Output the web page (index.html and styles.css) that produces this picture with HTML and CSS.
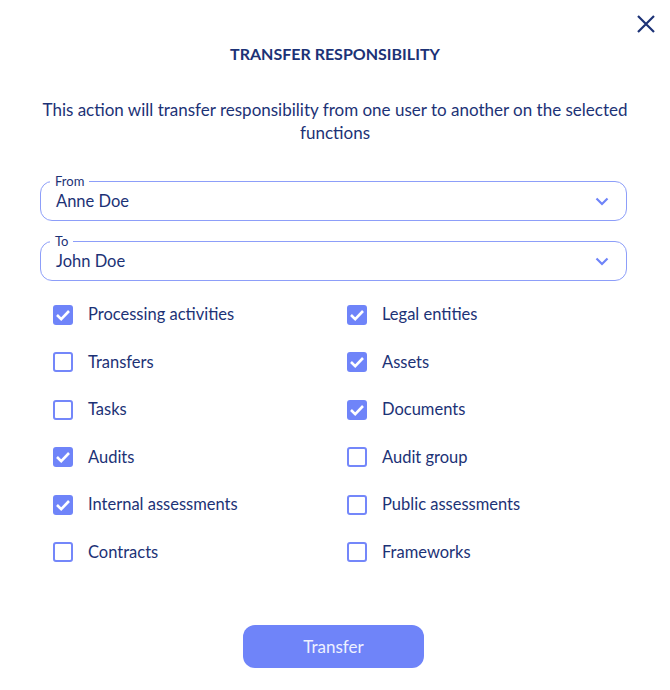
FILE: index.html
```html
<!DOCTYPE html>
<html lang="en">
<head>
    <meta charset="UTF-8">
    <title>Transfer responsibility</title>
    <link rel="stylesheet" href="styles.css">
</head>
<body>
    <div class="modal">
        <div class="modal-top">
            <a href="javascript:;" class="close">
                <svg width="18" height="18" viewBox="0 0 18 18"><path d="M1 1 L17 17 M17 1 L1 17" stroke="#1c3276" stroke-width="2.2" fill="none"/></svg>
            </a>
        </div>
        <h1 class="title">TRANSFER RESPONSIBILITY</h1>
        <p class="desc">This action will transfer responsibility from one user to another on the selected functions</p>

        <div class="select">
            <span class="label">From</span>
            <span class="value">Anne Doe</span>
            <svg class="chev" width="14" height="9" viewBox="0 0 14 9"><path d="M1.5 1.5 L7 7 L12.5 1.5" stroke="#6f84f9" stroke-width="2.2" fill="none"/></svg>
        </div>
        <div class="select">
            <span class="label">To</span>
            <span class="value">John Doe</span>
            <svg class="chev" width="14" height="9" viewBox="0 0 14 9"><path d="M1.5 1.5 L7 7 L12.5 1.5" stroke="#6f84f9" stroke-width="2.2" fill="none"/></svg>
        </div>

        <ul class="checks">
            <li><span class="box on"></span>Processing activities</li>
            <li><span class="box on"></span>Legal entities</li>
            <li><span class="box"></span>Transfers</li>
            <li><span class="box on"></span>Assets</li>
            <li><span class="box"></span>Tasks</li>
            <li><span class="box on"></span>Documents</li>
            <li><span class="box on"></span>Audits</li>
            <li><span class="box"></span>Audit group</li>
            <li><span class="box on"></span>Internal assessments</li>
            <li><span class="box"></span>Public assessments</li>
            <li><span class="box"></span>Contracts</li>
            <li><span class="box"></span>Frameworks</li>
        </ul>

        <div class="actions">
            <a href="javascript:;" class="btn">Transfer</a>
        </div>
    </div>
</body>
</html>
```

FILE: styles.css
```css
body,
div,
ul,
li,
h1,
p {
    padding: 0;
    margin: 0;
}
body {
    background: #fff;
    font-family: "Lato", "Noto Sans", sans-serif;
    color: #1c3276;
}
a {
    text-decoration: none;
}
.modal {
    width: 670px;
    height: 690px;
}
.modal-top {
    display: flex;
    justify-content: flex-end;
    padding: 15px 15px 0 0;
    height: 19px;
}
.close {
    display: block;
    width: 18px;
    height: 18px;
}
.title {
    margin-top: 10px;
    text-align: center;
    font-size: 16px;
    font-weight: 700;
    line-height: 20px;
}
.desc {
    margin: 34px auto 0;
    width: 620px;
    text-align: center;
    font-size: 17px;
    line-height: 23px;
}
.select {
    position: relative;
    margin-left: 40px;
    width: 587px;
    height: 40px;
    box-sizing: border-box;
    border: 1.5px solid #8d9ef9;
    border-radius: 12px;
    padding: 0 17px 0 15px;
    display: flex;
    align-items: center;
    justify-content: space-between;
}
.desc + .select {
    margin-top: 37px;
}
.select + .select {
    margin-top: 20px;
}
/* label sits on the top border */
.select .label {
    position: absolute;
    top: -9px;
    left: 9px;
    padding: 0 5px;
    background: #fff;
    font-size: 13px;
    line-height: 16px;
}
.value {
    font-size: 16.5px;
}
.checks {
    list-style: none;
    display: grid;
    grid-template-columns: 294px 294px;
    row-gap: 22px;
    padding: 21px 0 0 53px;
}
.checks li {
    display: flex;
    align-items: center;
    font-size: 16.5px;
    line-height: 25.5px;
}
.box {
    width: 20px;
    height: 20px;
    box-sizing: border-box;
    border: 2px solid #7487fa;
    border-radius: 3px;
    margin-right: 15px;
    flex: none;
}
.box.on {
    background: #6f84f9 url("data:image/svg+xml,%3Csvg xmlns='http://www.w3.org/2000/svg' width='20' height='20' viewBox='0 0 20 20'%3E%3Cpath d='M4 10 L8.2 14.2 L16 6' stroke='white' stroke-width='2.6' fill='none'/%3E%3C/svg%3E") no-repeat center;
    border: none;
}
.actions {
    display: flex;
    justify-content: center;
    padding-top: 60px;
}
.btn {
    display: block;
    width: 181px;
    height: 43px;
    margin-left: -3px;
    border-radius: 12px;
    background: #6f84f9;
    color: #eef1ff;
    text-align: center;
    line-height: 43px;
    font-size: 17px;
}
```
